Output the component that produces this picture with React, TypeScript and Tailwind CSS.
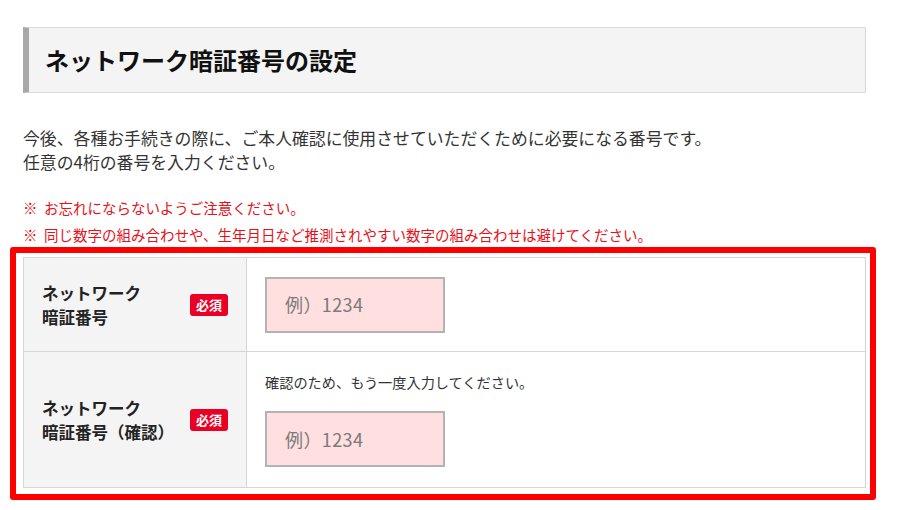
import React from 'react';

const jp = "font-['Noto_Sans_CJK_JP','Noto_Sans',sans-serif]";

const Badge = () => (
  <span className="inline-flex h-[22px] w-[38px] items-center justify-center rounded-[3px] bg-[#eb0025] text-[13px] font-bold leading-none text-white">
    必須
  </span>
);

const PinInput = () => (
  <div className="flex h-[56px] w-[180px] items-center border-2 border-[#b3b3b3] bg-[#ffdfdf] pl-[18px] text-[18px] tracking-[0.4px] text-[#7a7a7a]">
    例）1234
  </div>
);

const Label: React.FC<{ lines: string[] }> = ({ lines }) => (
  <div className="flex w-[223px] shrink-0 items-center justify-between border-r border-[#d6d6d6] bg-[#f4f4f4] pl-[18px] pr-[18px]">
    <div className="text-[16.5px] font-bold leading-[24px] text-[#222]">
      {lines.map((l) => (
        <div key={l}>{l}</div>
      ))}
    </div>
    <Badge />
  </div>
);

export default function App() {
  return (
    <div className={`${jp} min-h-[510px] w-[900px] bg-white`}>
      <div className="ml-[23px] w-[843px] pt-[27px]">
        <div className="flex h-[66px] items-center border border-l-[6px] border-[#d9d9d9] border-l-[#a8a8a8] bg-[#f4f4f4] pl-[16px]">
          <h1 className="text-[24px] font-bold leading-none text-[#111]">ネットワーク暗証番号の設定</h1>
        </div>

        <p className="mt-[33px] text-[16.85px] leading-[24px] text-[#333]">
          今後、各種お手続きの際に、ご本人確認に使用させていただくために必要になる番号です。
          <br />
          任意の4桁の番号を入力ください。
        </p>

        <div className="mt-[20px] text-[14.5px] leading-[27px] text-[#e8101a]">
          <div>※&nbsp;&nbsp;お忘れにならないようご注意ください。</div>
          <div>※&nbsp;&nbsp;同じ数字の組み合わせや、生年月日など推測されやすい数字の組み合わせは避けてください。</div>
        </div>

        <div className="-ml-[13px] -mt-[1px] w-[866px] rounded-[3px] border-[6px] border-[#ff0000] pb-[6px] pl-[7px] pr-[4px] pt-[4px]">
          <div className="border border-[#d6d6d6]">
            <div className="flex h-[93px]">
              <Label lines={['ネットワーク', '暗証番号']} />
              <div className="flex flex-1 items-center pl-[18px]">
                <PinInput />
              </div>
            </div>
            <div className="flex h-[136px] border-t border-[#d6d6d6]">
              <Label lines={['ネットワーク', '暗証番号（確認）']} />
              <div className="flex flex-1 flex-col pl-[18px] pt-[19px]">
                <div className="text-[14.2px] leading-[22px] text-[#333]">確認のため、もう一度入力してください。</div>
                <div className="mt-[18px]">
                  <PinInput />
                </div>
              </div>
            </div>
          </div>
        </div>
      </div>
    </div>
  );
}
